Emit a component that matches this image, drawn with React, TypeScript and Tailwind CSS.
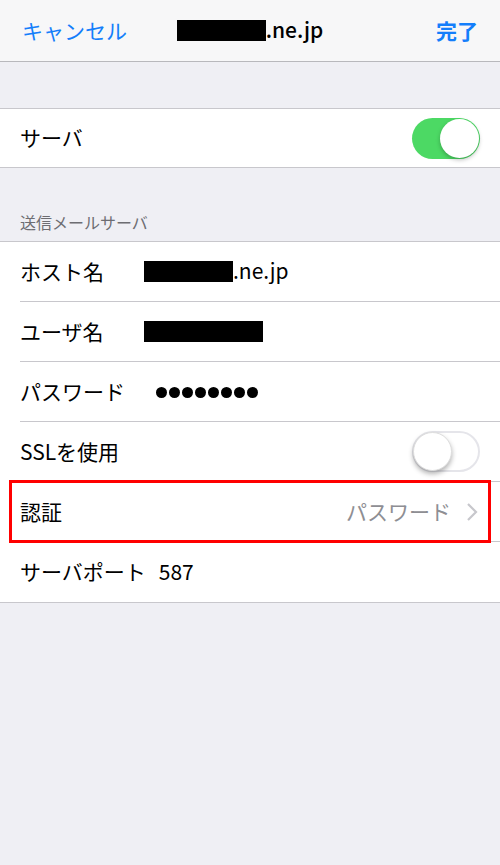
import React from 'react';

const font = { fontFamily: '"Noto Sans CJK JP", "Noto Sans", sans-serif' };

const Toggle = ({ on }: { on: boolean }) => (
  on ? (
    <div className="w-[68px] h-[41px] rounded-full bg-[#4cd964] relative">
      <div className="absolute right-[1px] top-[1px] w-[39px] h-[39px] rounded-full bg-white shadow-[0_2px_4px_rgba(0,0,0,0.25)]" />
    </div>
  ) : (
    <div className="w-[68px] h-[41px] rounded-full bg-white border-2 border-[#e5e5ea] relative">
      <div className="absolute left-[-1px] top-[-1px] w-[39px] h-[39px] rounded-full bg-white shadow-[0_3px_5px_rgba(0,0,0,0.3)] border border-[#ddd]" />
    </div>
  )
);

const Row = ({ children, last }: { children: React.ReactNode; last?: boolean }) => (
  <div className="relative h-[60px] pl-[20px]">
    <div className={`h-full flex items-center pr-[20px] ${last ? '' : 'border-b border-[#c8c7cc]'}`}>{children}</div>
  </div>
);

const Redacted = ({ w }: { w: number }) => (
  <span className="inline-block h-[21px] bg-black" style={{ width: w }} />
);

export default function App() {
  const dots = [0, 1, 2, 3, 4, 5, 6, 7];
  return (
    <div className="w-[500px] h-[865px] bg-[#efeff4] text-black" style={font}>
      {/* nav bar */}
      <div className="h-[62px] bg-[#f7f7f8] border-b border-[#b8b8bc] flex items-center px-[22px]">
        <span className="flex-1 text-[#147efb] text-[21px]">キャンセル</span>
        <span className="flex items-center text-[21px] font-medium">
          <Redacted w={89} />
          <span className="-mt-[2px]">.ne.jp</span>
        </span>
        <span className="flex-1 text-right text-[#147efb] text-[21px] font-bold">完了</span>
      </div>

      <div className="h-[46px]" />
      <div className="bg-white border-y border-[#c8c7cc]">
        <div className="h-[58px] flex items-center justify-between pl-[20px] pr-[20px]">
          <span className="text-[21px]">サーバ</span>
          <Toggle on />
        </div>
      </div>

      <div className="h-[73px] flex items-end pl-[20px] pb-[7px]">
        <span className="text-[16px] text-[#6d6d72]">送信メールサーバ</span>
      </div>

      <div className="bg-white border-y border-[#c8c7cc]">
        <Row>
          <span className="text-[21px] w-[124px]">ホスト名</span>
          <span className="flex items-center text-[21px]">
            <Redacted w={89} />
            <span className="-mt-[2px]">.ne.jp</span>
          </span>
        </Row>
        <Row>
          <span className="text-[21px] w-[124px]">ユーザ名</span>
          <Redacted w={119} />
        </Row>
        <Row>
          <span className="text-[21px] w-[136px]">パスワード</span>
          <span className="flex gap-[2px] mt-[1px]">
            {dots.map(d => <span key={d} className="w-[11px] h-[11px] rounded-full bg-black" />)}
          </span>
        </Row>
        <Row>
          <span className="text-[21px] flex-1">SSLを使用</span>
          <Toggle on={false} />
        </Row>
        <Row>
          <span className="text-[21px] flex-1">認証</span>
          <span className="text-[21px] text-[#8e8e93]">パスワード</span>
          <svg width="12" height="20" viewBox="0 0 12 20" className="ml-[15px] mr-[2px]">
            <path d="M2 2 L10 10 L2 18" fill="none" stroke="#c7c7cc" strokeWidth="2.2" />
          </svg>
          <div className="absolute left-[9px] right-[9px] -top-[2px] -bottom-[1px] border-[3px] border-[#ff0000] pointer-events-none" />
        </Row>
        <Row last>
          <span className="text-[21px]">サーバポート</span>
          <span className="text-[21px] ml-[13px]">587</span>
        </Row>
      </div>
    </div>
  );
}
